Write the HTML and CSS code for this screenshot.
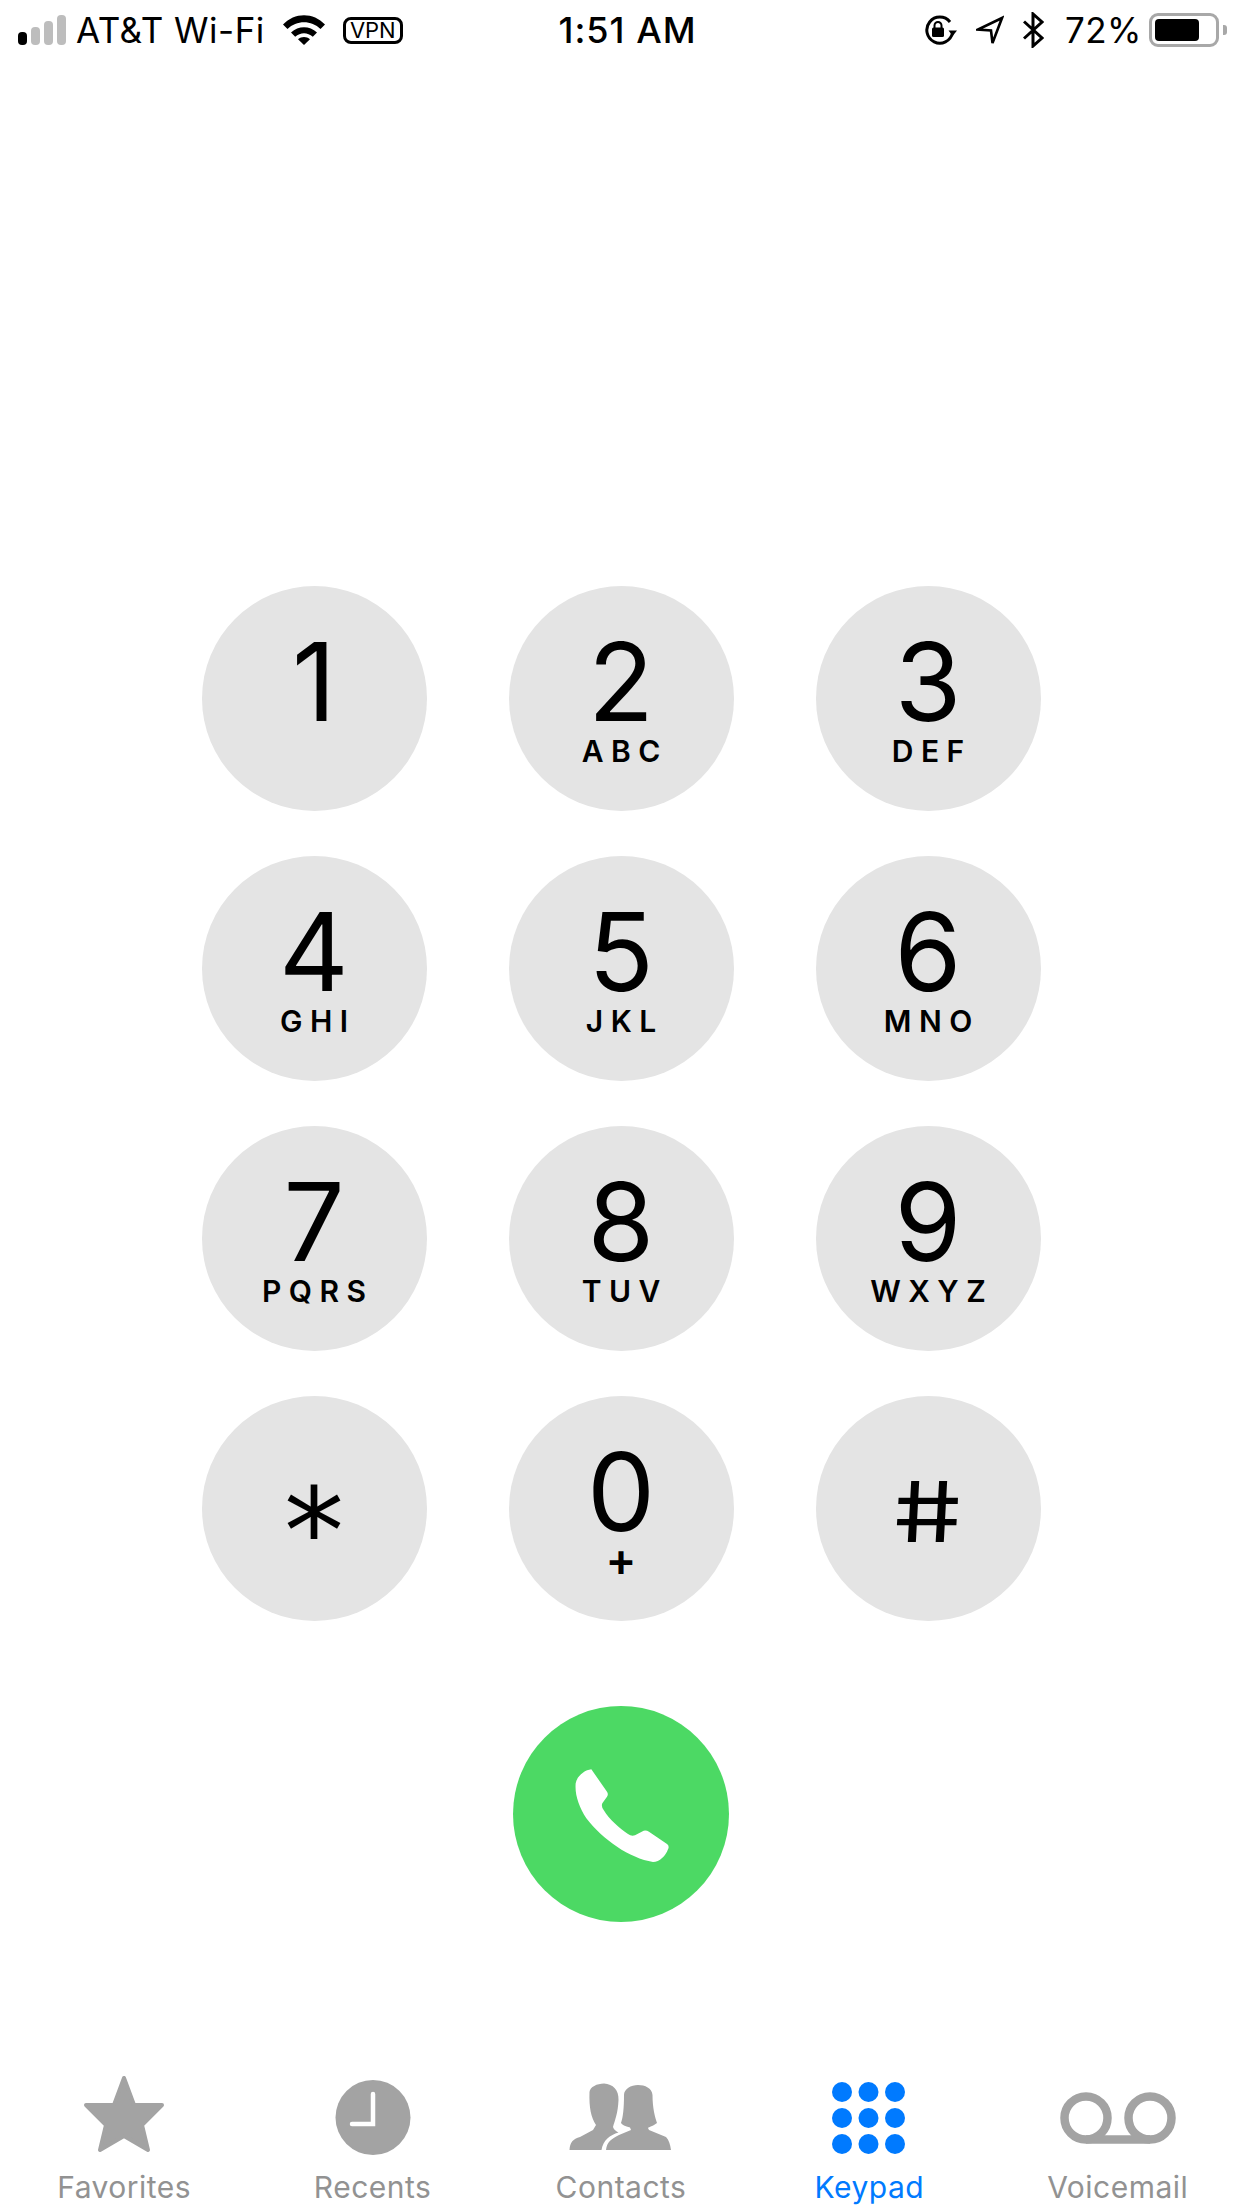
FILE: index.html
```html
<!DOCTYPE html>
<html lang="en">
<head>
    <meta charset="UTF-8">
    <title>Keypad</title>
    <link rel="stylesheet" href="styles.css">
</head>
<body>
    <header class="status-bar">
        <div class="status-left">
            <div class="signal">
                <span class="bar bar-1 on"></span>
                <span class="bar bar-2"></span>
                <span class="bar bar-3"></span>
                <span class="bar bar-4"></span>
            </div>
            <span class="carrier">AT&amp;T Wi-Fi</span>
            <svg class="wifi" width="42" height="30" viewBox="0 0 42 30">
                <path d="M0 9.500C11.500-3 30.500-3 42 9.500L37.500 14C28.500 5 13.500 5 4.500 14Z"/>
                <path d="M8 17.500C15.500 10.500 26.500 10.500 34 17.500L29.800 21.700C24.500 17 17.500 17 12.200 21.700Z"/>
                <path d="M15 24.200C18.500 21.300 23.500 21.300 27 24.200L21 30Z"/>
            </svg>
            <span class="vpn">VPN</span>
        </div>
        <div class="status-time">1:51 AM</div>
        <div class="status-right">
            <svg class="rotation-lock" width="34" height="30" viewBox="0 0 34 30">
                <path d="M29.500 18A13 13 0 1 1 27 7" fill="none" stroke="#000" stroke-width="3"/>
                <path d="M25.500 15.500H34L29.700 21Z"/>
                <rect x="9" y="12.500" width="12" height="9.500" rx="1.500"/>
                <path d="M11.500 13V10.500a3.500 3.500 0 0 1 7 0V13" fill="none" stroke="#000" stroke-width="2"/>
            </svg>
            <svg class="location" width="28" height="30" viewBox="0 0 28 30">
                <path d="M26 3L2 14.500L15 15.500L16.500 28Z" fill="none" stroke="#000" stroke-width="2.600"/>
            </svg>
            <svg class="bluetooth" width="21" height="36" viewBox="0 0 21 36">
                <path d="M1 9.500L19 26L10 34V2L19 10L1 26.500" fill="none" stroke="#000" stroke-width="3"/>
            </svg>
            <span class="battery-pct">72%</span>
            <div class="battery">
                <div class="battery-level"></div>
            </div>
            <span class="battery-nub"></span>
        </div>
    </header>

    <main class="dialer">
        <div class="keypad">
            <button class="key"><span class="digit">1</span></button>
            <button class="key"><span class="digit">2</span><span class="letters">ABC</span></button>
            <button class="key"><span class="digit">3</span><span class="letters">DEF</span></button>
            <button class="key"><span class="digit">4</span><span class="letters">GHI</span></button>
            <button class="key"><span class="digit">5</span><span class="letters">JKL</span></button>
            <button class="key"><span class="digit">6</span><span class="letters">MNO</span></button>
            <button class="key"><span class="digit">7</span><span class="letters">PQRS</span></button>
            <button class="key"><span class="digit">8</span><span class="letters">TUV</span></button>
            <button class="key"><span class="digit">9</span><span class="letters">WXYZ</span></button>
            <button class="key"><span class="symbol star">*</span></button>
            <button class="key"><span class="digit">0</span><span class="plus">+</span></button>
            <button class="key"><span class="symbol hash">#</span></button>
        </div>
        <button class="call">
            <svg width="216" height="216" viewBox="70 48 648 648">
                <path fill="#fff" d="M305 238L352 305Q357 313 352 320L338 340Q334 350 342 360C360 390 390 415 415 432Q425 440 436 436L462 422Q470 420 478 425L532 462Q540 468 535 478C528 498 510 516 490 516C420 505 340 450 290 385C268 350 255 315 258 280C262 258 285 240 305 238Z"/>
            </svg>
        </button>
    </main>

    <nav class="tab-bar">
        <div class="tab">
            <svg class="tab-icon" width="120" height="90" viewBox="0 0 120 90">
                <path fill="#a3a3a3" stroke="#a3a3a3" stroke-width="4" stroke-linejoin="round" d="M60 8L70 35H98L78 55L84 80L60 66L36 80L42 55L22 35H50Z"/>
            </svg>
            <span class="tab-label">Favorites</span>
        </div>
        <div class="tab">
            <svg class="tab-icon" width="120" height="90" viewBox="0 0 120 90">
                <circle cx="60" cy="47.500" r="37.500" fill="#a3a3a3"/>
                <path d="M60 24V54H39" fill="none" stroke="#fff" stroke-width="4.500" stroke-linecap="round"/>
            </svg>
            <span class="tab-label">Recents</span>
        </div>
        <div class="tab">
            <svg class="tab-icon" width="120" height="90" viewBox="0 0 120 90">
                <path fill="#a3a3a3" d="M8.500 80C9 72 12 69 19 67L32 60L35 55C30 47 28 38 28.500 22C29 17 36 13.500 43 13.500C52 14 58 20 57.500 30C57 43 54 50 52 57C53 60 55 61 57.500 62.500C49 65 42 70 40.500 80Z"/>
                <path fill="#a3a3a3" d="M45 80C46 72 50 69 58 65L70 60L69 57.500C64 56 61 55 60 53C62 47 63 38 63 25C63 19 70 15 77 15C84 15 91 18 91.500 25C91.500 38 94 47 96 53C92 56 88 57 87 58L88 60L105 67C108 70 109 74 110 80Z"/>
            </svg>
            <span class="tab-label">Contacts</span>
        </div>
        <div class="tab active">
            <svg class="tab-icon" width="120" height="90" viewBox="0 0 120 90">
                <circle cx="33" cy="22" r="10"/><circle cx="59.500" cy="22" r="10"/><circle cx="86" cy="22" r="10"/>
                <circle cx="33" cy="48" r="10"/><circle cx="59.500" cy="48" r="10"/><circle cx="86" cy="48" r="10"/>
                <circle cx="33" cy="74" r="10"/><circle cx="59.500" cy="74" r="10"/><circle cx="86" cy="74" r="10"/>
            </svg>
            <span class="tab-label">Keypad</span>
        </div>
        <div class="tab">
            <svg class="tab-icon" width="120" height="90" viewBox="0 0 120 90">
                <g fill="none" stroke="#a3a3a3" stroke-width="8.500">
                    <circle cx="28" cy="48" r="21.500"/>
                    <circle cx="92" cy="48" r="21.500"/>
                    <path d="M28 69.500H92"/>
                </g>
            </svg>
            <span class="tab-label">Voicemail</span>
        </div>
    </nav>
</body>
</html>
```
FILE: styles.css
```css
html, body {
    margin: 0;
    padding: 0;
}
body {
    width: 1242px;
    height: 2208px;
    overflow: hidden;
    display: flex;
    flex-direction: column;
    background: #fff;
    color: #000;
    font-family: Inter, "Liberation Sans", sans-serif;
}

.status-bar {
    height: 60px;
    padding: 0 15px 0 18px;
    display: grid;
    grid-template-columns: 1fr auto 1fr;
    align-items: center;
}
.status-left, .status-right {
    display: flex;
    align-items: center;
}
.status-right {
    justify-content: flex-end;
}
.signal {
    display: flex;
    align-items: flex-end;
    gap: 4px;
    height: 30px;
    margin-right: 10px;
}
.bar {
    width: 9px;
    border-radius: 4px;
    background: #bdbdbd;
}
.bar.on {
    background: #000;
}
.bar-1 { height: 13px; }
.bar-2 { height: 18px; }
.bar-3 { height: 24px; }
.bar-4 { height: 30px; }
.carrier, .battery-pct {
    font-size: 35px;
    font-weight: 400;
    line-height: 40px;
    letter-spacing: 0.5px;
}
.wifi {
    margin-left: 18px;
}
.vpn {
    margin-left: 18px;
    width: 54px;
    height: 21px;
    border: 3px solid #000;
    border-radius: 8px;
    font-size: 22px;
    line-height: 21px;
    text-align: center;
}
.status-time {
    font-size: 36px;
    font-weight: 500;
    letter-spacing: 1px;
    margin-left: 10px;
}
.rotation-lock {
    margin-right: 19px;
}
.location {
    margin-right: 19px;
}
.bluetooth {
    margin-right: 21px;
}
.battery-pct {
    margin-right: 7px;
}
.battery {
    box-sizing: border-box;
    width: 70px;
    height: 34px;
    padding: 3px;
    border: 3px solid #a8a8a8;
    border-radius: 9px;
}
.battery-level {
    width: 44px;
    height: 22px;
    border-radius: 4px;
    background: #000;
}
.battery-nub {
    width: 4px;
    height: 10px;
    margin-left: 4px;
    border-radius: 0 3px 3px 0;
    background: #a8a8a8;
}

.dialer {
    flex: 1;
    padding-top: 526px;
    display: flex;
    flex-direction: column;
    align-items: center;
}
.keypad {
    display: grid;
    grid-template-columns: repeat(3, 225px);
    grid-auto-rows: 225px;
    column-gap: 82px;
    row-gap: 45px;
}
.key {
    margin: 0;
    padding: 51px 0 0;
    border: none;
    border-radius: 50%;
    background: #e4e4e4;
    color: #000;
    font-family: inherit;
    display: flex;
    flex-direction: column;
    align-items: center;
}
.digit {
    font-size: 108px;
    font-weight: 380;
    line-height: 90px;
}
.letters {
    margin-top: 9px;
    font-size: 30px;
    font-weight: 600;
    line-height: 30px;
    letter-spacing: 7.500px;
    padding-left: 7.500px;
}
.plus {
    font-size: 46px;
    font-weight: 600;
    line-height: 30px;
    margin-top: 7px;
}
.symbol {
    line-height: 90px;
}
.star {
    font-family: "DejaVu Sans", sans-serif;
    font-size: 120px;
    font-weight: 400;
    padding-top: 40px;
}
.hash {
    display: block;
    font-size: 84px;
    font-weight: 420;
    margin-top: 20px;
    transform: skewX(9deg) scaleX(1.300);
}
.call {
    width: 216px;
    height: 216px;
    margin: 85px 0 0;
    padding: 0;
    border: none;
    border-radius: 50%;
    background: #4cd964;
}
.call svg {
    display: block;
}

.tab-bar {
    height: 148px;
    padding-top: 10px;
    box-sizing: border-box;
    display: grid;
    grid-template-columns: repeat(5, 1fr);
}
.tab {
    display: flex;
    flex-direction: column;
    align-items: center;
    color: #929292;
}
.tab-icon {
    display: block;
    flex: none;
    fill: #007aff;
}
.tab-label {
    margin-top: 9px;
    font-size: 30px;
    line-height: 36px;
    letter-spacing: 0.5px;
}
.tab.active {
    color: #007aff;
}
```
